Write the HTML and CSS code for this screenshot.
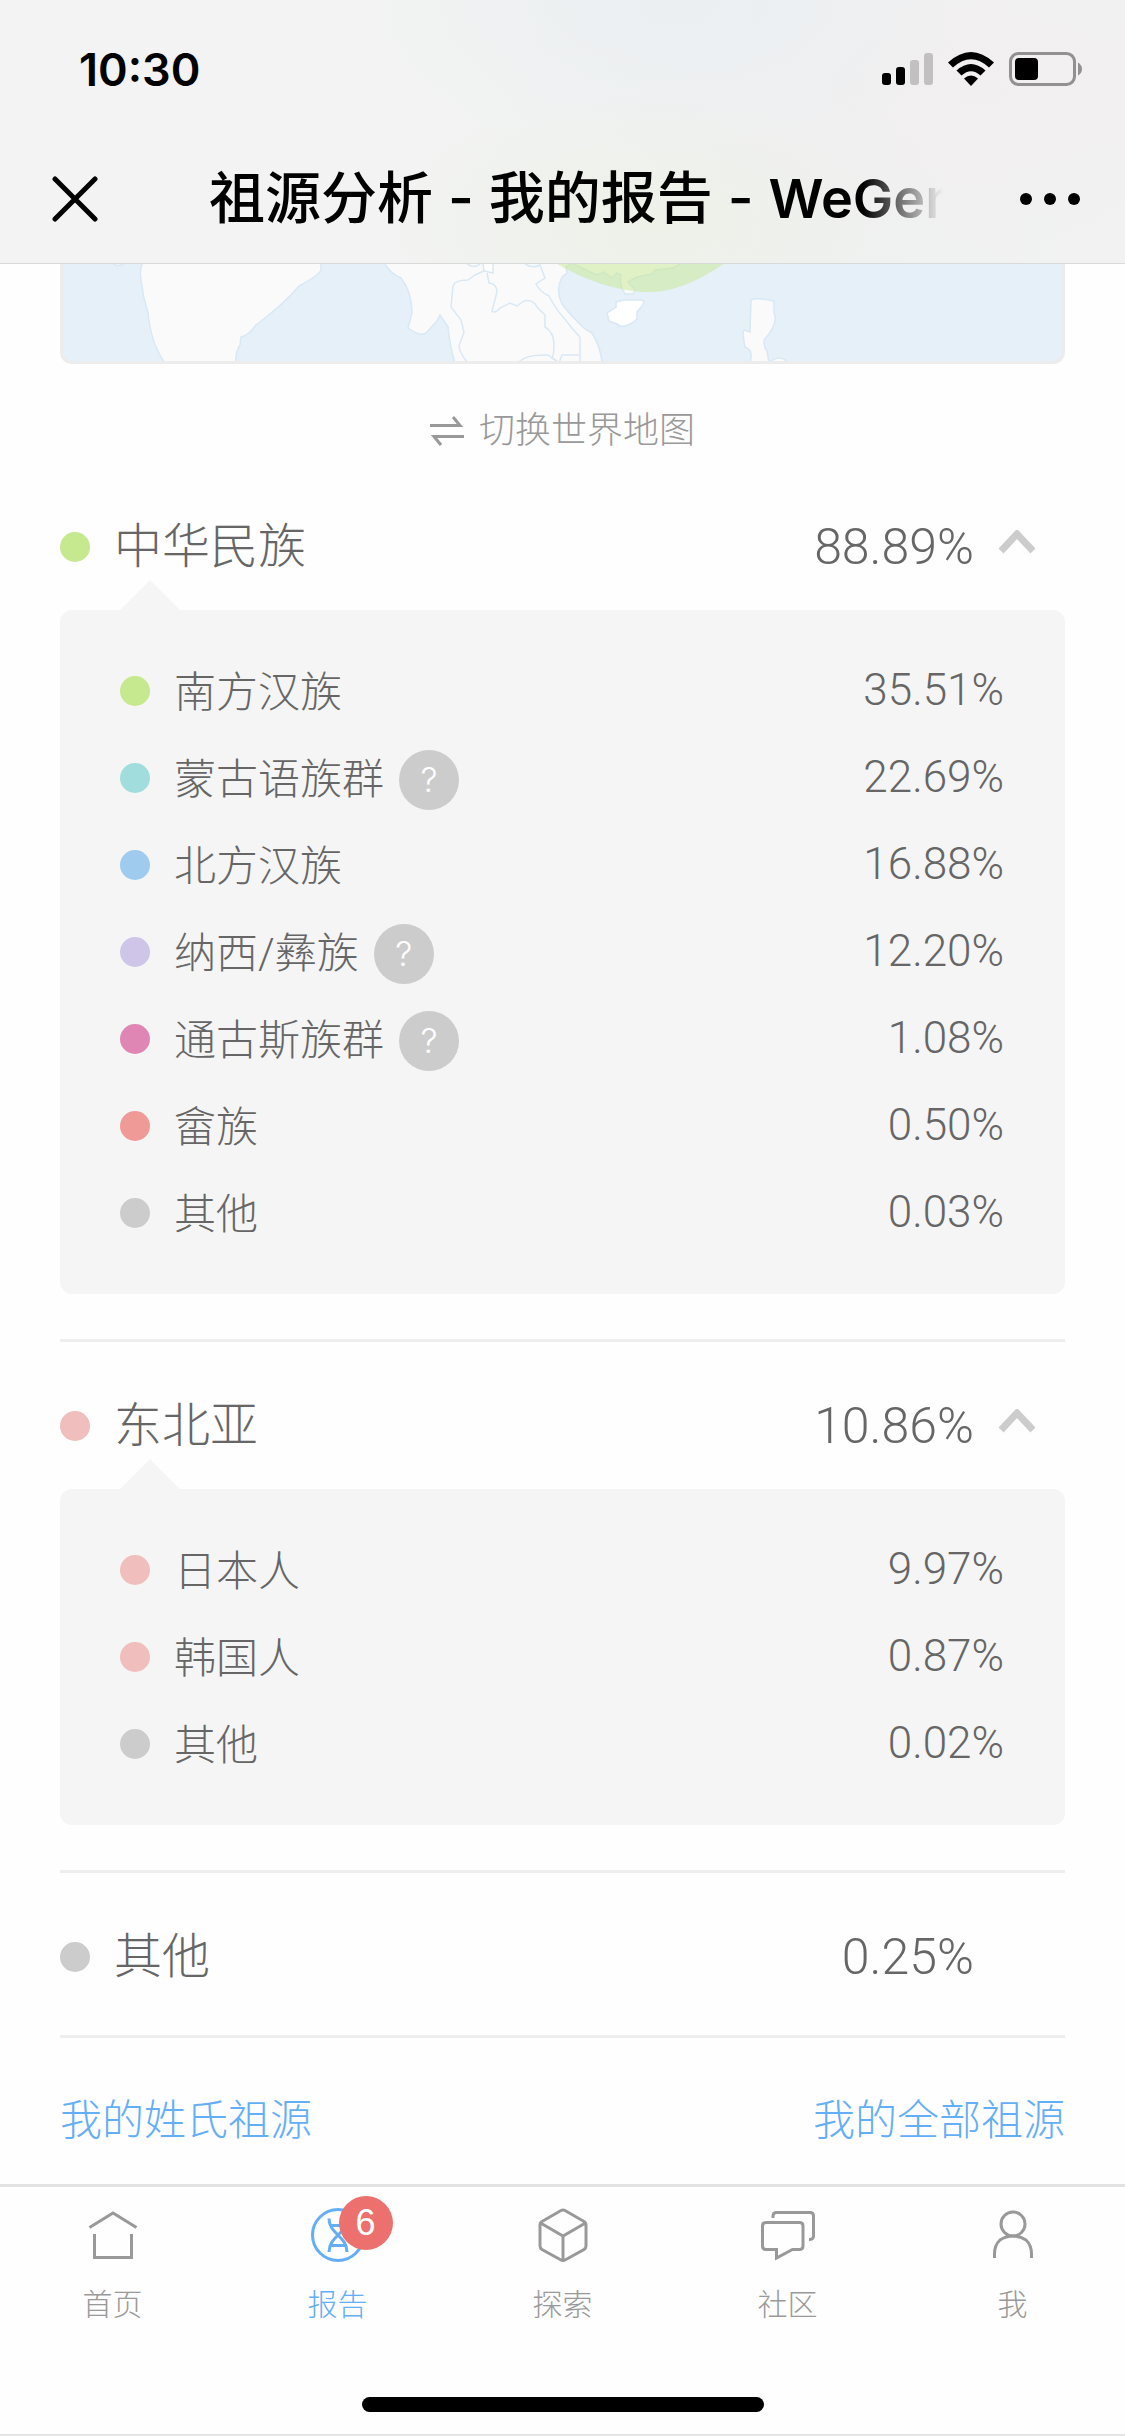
FILE: index.html
```html
<!DOCTYPE html>
<html lang="zh-CN">
<head>
    <meta charset="UTF-8">
    <meta name="viewport" content="width=device-width, initial-scale=1">
    <title>祖源分析 - 我的报告 - WeGene</title>
    <link rel="stylesheet" href="styles.css">
</head>
<body>
    <header class="header">
        <div class="status-bar">
            <span class="time">10:30</span>
            <div class="status-icons">
                <svg width="51" height="34" viewBox="0 0 51 34">
                    <rect x="0" y="21" width="9" height="12" rx="3"/>
                    <rect x="14" y="15" width="9" height="18" rx="3"/>
                    <rect x="28" y="8" width="9" height="25" rx="3" fill="#c2c0c1"/>
                    <rect x="42" y="1" width="9" height="32" rx="3" fill="#c2c0c1"/>
                </svg>
                <svg width="46" height="34" viewBox="0 0 46 34">
                    <path d="M0 10.500 Q23 -10.500 46 10.500 L41 15.500 Q23 -1 5 15.500Z"/>
                    <path d="M8.500 18.500 Q23 5.500 37.500 18.500 L32.500 23.500 Q23 15 13.500 23.500Z"/>
                    <path d="M16 26.500 Q23 20.500 30 26.500 L23 34Z"/>
                </svg>
                <svg width="74" height="34" viewBox="0 0 74 34">
                    <rect x="1.500" y="1.500" width="64" height="31" rx="8" fill="none" stroke="#929091" stroke-width="3"/>
                    <rect x="6" y="6" width="23" height="22" rx="4"/>
                    <path d="M69 10.500 Q73 13 73 17 Q73 21 69 23.500Z" fill="#929091"/>
                </svg>
            </div>
        </div>
        <div class="nav-bar">
            <button class="icon-btn" type="button" aria-label="关闭">
                <svg width="46" height="46" viewBox="0 0 46 46"><path d="M3 3 L43 43 M43 3 L3 43" fill="none" stroke="#000" stroke-width="5" stroke-linecap="round"/></svg>
            </button>
            <h1 class="title">祖源分析 - 我的报告 - <span class="brand">WeGene</span></h1>
            <button class="icon-btn" type="button" aria-label="更多">
                <svg width="60" height="12" viewBox="0 0 60 12"><circle cx="6" cy="6" r="6"/><circle cx="30" cy="6" r="6"/><circle cx="54" cy="6" r="6"/></svg>
            </button>
        </div>
    </header>

    <main class="content">
        <div class="map">
            <svg viewBox="63 264 999 97">
                <g fill="#fafafa" stroke="#d9e8f5" stroke-width="1.500">
                    <path d="M111 262 Q118 269 126 262"/>
                    <path d="M143 262 Q139 270 141 280 Q143 297 148 313 Q151 344 165 363 H236 Q235 353 240 345 L241 337 Q248 336 256 325 Q284 304 299 286 Q318 276 321 270 V262Z"/>
                    <path d="M384 262 Q389 273 401 278 Q412 292 412 313 L408 328 Q422 338 427 332 L437 321 L440 315 L448 327 Q450 347 455 363 H602 Q601 348 592 333 L585 329 Q570 315 562 304 Q555 290 562 277 L567 273 L566 267 L572 263 L590 272 L597 275 L604 272 L612 278 L617 273 L621 275 Q619 285 625 294 L633 294 L635 290 L628 282 L637 277 L652 274 L655 270 L673 268 L684 262Z"/>
                    <path d="M751 300 Q755 297 774 301 V313 Q779 323 764 340 Q764 349 767 351 L769 363 H750 Q754 350 745 347 Q742 332 744 330 L750 332Z"/>
                    <path d="M769 363 Q779 353 789 363"/>
                    <path fill="#fff" d="M607 313 L616 307 L616 302 L624 300 H641 L644 301 L643 305 L637 312 L637 319 L632 323 Q621 329 617 324 L609 321Z"/>
                    <path fill="#fff" d="M483 262 L484 271 L493 273 L493 262Z"/>
                </g>
                <g fill="none" stroke="#d9e8f5" stroke-width="1.500">
                    <path d="M467 264 Q474 269 480 264 M484 271 L475 275 L468 280 Q455 280 453 286 L451 307 L461 320 L464 332 L459 346 Q460 354 468 363"/>
                    <path d="M487 273 L489 283 Q497 284 497 292 L492 311 Q495 314 500 308 L510 303 L517 306 L524 301 Q533 299 537 307 L545 315 V327 Q554 332 554 345 Q554 354 552 358 L560 363"/>
                    <path d="M525 264 Q533 269 540 265 L545 278 L536 284 Q540 292 549 296 Q557 311 564 318 Q573 330 580 337 V363"/>
                    <path d="M518 363 Q525 354 548 355 L559 363 L562 355 L579 355"/>
                </g>
                <path fill="#c5e78f" opacity=".5" d="M554 262 C590 284 625 292 650 292 C675 292 702 279 726 262Z"/>
            </svg>
        </div>

        <button class="switch-map" type="button">
            <svg width="34" height="30" viewBox="0 0 34 30"><path d="M0 9.500 H30 L23 1 M34 20.500 H4 L11 29" fill="none" stroke="#999" stroke-width="3"/></svg>
            切换世界地图
        </button>

        <section class="group">
            <button class="group-head" type="button" aria-expanded="true">
                <i class="dot green"></i>
                <span class="name">中华民族</span>
                <span class="percent">88.89%</span>
                <svg class="arrow" viewBox="0 0 36 24"><path d="M2 21 L18 4 L34 21" fill="none" stroke="#ccc" stroke-width="7"/></svg>
            </button>
            <ul class="group-body">
                <li><i class="dot green"></i><span class="name">南方汉族</span><span class="percent">35.51%</span></li>
                <li><i class="dot teal"></i><span class="name">蒙古语族群 <button class="help" type="button">?</button></span><span class="percent">22.69%</span></li>
                <li><i class="dot blue"></i><span class="name">北方汉族</span><span class="percent">16.88%</span></li>
                <li><i class="dot purple"></i><span class="name">纳西/彝族 <button class="help" type="button">?</button></span><span class="percent">12.20%</span></li>
                <li><i class="dot magenta"></i><span class="name">通古斯族群 <button class="help" type="button">?</button></span><span class="percent">1.08%</span></li>
                <li><i class="dot red"></i><span class="name">畲族</span><span class="percent">0.50%</span></li>
                <li><i class="dot gray"></i><span class="name">其他</span><span class="percent">0.03%</span></li>
            </ul>
        </section>

        <section class="group">
            <button class="group-head" type="button" aria-expanded="true">
                <i class="dot pink"></i>
                <span class="name">东北亚</span>
                <span class="percent">10.86%</span>
                <svg class="arrow" viewBox="0 0 36 24"><path d="M2 21 L18 4 L34 21" fill="none" stroke="#ccc" stroke-width="7"/></svg>
            </button>
            <ul class="group-body">
                <li><i class="dot pink"></i><span class="name">日本人</span><span class="percent">9.97%</span></li>
                <li><i class="dot pink"></i><span class="name">韩国人</span><span class="percent">0.87%</span></li>
                <li><i class="dot gray"></i><span class="name">其他</span><span class="percent">0.02%</span></li>
            </ul>
        </section>

        <section class="group single">
            <div class="group-head">
                <i class="dot gray"></i>
                <span class="name">其他</span>
                <span class="percent">0.25%</span>
                <span class="arrow"></span>
            </div>
        </section>

        <div class="links">
            <a href="#">我的姓氏祖源</a>
            <a href="#">我的全部祖源</a>
        </div>
    </main>

    <nav class="tab-bar">
        <div class="tabs">
            <a class="tab" href="#">
                <svg viewBox="0 0 54 54"><path d="M3.500 19.500 L27 5 L50.500 19.500 M8.500 26 V49.500 H45.500 V26"/></svg>
                首页
            </a>
            <a class="tab active" href="#">
                <span class="icon-wrap">
                    <svg viewBox="0 0 54 54">
                        <circle cx="27" cy="27" r="25.500"/>
                        <path d="M18 10.500 C18 26 36 28 36 44 M36 10.500 C36 26 18 28 18 44 M20 17.500 H34 M20 37.500 H34"/>
                    </svg>
                    <span class="badge">6</span>
                </span>
                报告
            </a>
            <a class="tab" href="#">
                <svg viewBox="0 0 54 54"><path d="M25 2.500 Q27 1.500 29 2.500 L48 13.500 Q50 14.500 50 17 V38 Q50 40 48 41.500 L29 52 Q27 53 25 52 L6 41.500 Q4 40 4 38 V17 Q4 14.500 6 13.500Z M4.500 15 L27 28 L49.500 15 M27 28 V52"/></svg>
                探索
            </a>
            <a class="tab" href="#">
                <svg viewBox="0 0 54 54"><path d="M12 10 V8 Q12 4.500 15.500 4.500 H49 Q52.500 4.500 52.500 8 V28 Q52.500 31.500 48 31.500 M5 14.500 H38.500 Q42 14.500 42 18 V38 Q42 41.500 38.500 41.500 H31.500 L15.500 50 V41.500 H5 Q1.500 41.500 1.500 38 V18 Q1.500 14.500 5 14.500Z"/></svg>
                社区
            </a>
            <a class="tab" href="#">
                <svg viewBox="0 0 54 54"><circle cx="27" cy="16" r="12"/><path d="M8.500 50 V46 Q8.500 37 14 32 Q20 28 27 28 Q34 28 40 32 Q45.500 37 45.500 46 V50"/></svg>
                我
            </a>
        </div>
        <div class="home-indicator"></div>
    </nav>
</body>
</html>
```
FILE: styles.css
```css
* { box-sizing: border-box; }
body {
    margin: 0;
    min-height: 100vh;
    display: flex;
    flex-direction: column;
    font-family: 'Roboto', 'Noto Sans CJK SC', sans-serif;
    font-weight: 300;
    color: #666;
    background: #fefefe;
}
button {
    margin: 0;
    padding: 0;
    border: none;
    background: none;
    font: inherit;
    color: inherit;
    cursor: pointer;
}
a { text-decoration: none; }
svg { display: block; flex: none; }

/* status bar + title */
.header {
    border-bottom: 1px solid #d8dada;
    background:
        radial-gradient(ellipse 260px 130px at 58% 85%, #eef1e8, transparent),
        radial-gradient(ellipse 300px 160px at 60% 0%, #ebeff2, transparent),
        radial-gradient(ellipse 300px 160px at 88% 35%, #f2eff0, transparent),
        linear-gradient(90deg, #f3f3f3, #f2f3f2 40%, #eff0f1 70%, #f2f2f2);
    color: #000;
}
.status-bar {
    height: 132px;
    padding: 6px 42px 0 79px;
    display: flex;
    align-items: center;
    justify-content: space-between;
}
.time {
    font-family: 'Inter', sans-serif;
    font-size: 45px;
    font-weight: 600;
}
.status-icons { display: flex; gap: 15px; }
.nav-bar {
    height: 131px;
    padding: 2px 45px 0 52px;
    display: flex;
    align-items: center;
}
.title {
    flex: 1;
    margin: 0 77px 0 111px;
    overflow: hidden;
    white-space: nowrap;
    font-family: 'Inter', 'Noto Sans CJK SC', sans-serif;
    font-size: 56px;
    font-weight: 500;
    line-height: 84px;
    -webkit-mask-image: linear-gradient(90deg, #000 89%, transparent);
    mask-image: linear-gradient(90deg, #000 89%, transparent);
}
.brand {
    font-size: 54px;
    font-weight: 600;
}

.content { padding: 0 60px; }
.map {
    border: 3px solid #ececec;
    border-top: none;
    border-radius: 0 0 12px 12px;
    background: #e5f0f8;
    overflow: hidden;
}
.switch-map {
    width: 100%;
    padding: 40px 0 5px;
    display: flex;
    align-items: center;
    justify-content: center;
    gap: 15px;
    font-size: 36px;
    line-height: 54px;
    color: #999;
}

/* ancestry groups */
.group { border-bottom: 3px solid #eee; }
.group-head {
    width: 100%;
    height: 147px;
    padding: 21px 30px 0 0;
    display: flex;
    align-items: center;
    text-align: left;
    font-size: 48px;
    line-height: 72px;
}
.dot {
    width: 30px;
    height: 30px;
    margin-right: 24px;
    border-radius: 50%;
    flex: none;
}
.green { background: #c6e88e; }
.teal { background: #a1dddd; }
.blue { background: #9fcbee; }
.purple { background: #cfc5e8; }
.magenta { background: #df86b4; }
.red { background: #f09a97; }
.pink { background: #f0bebc; }
.gray { background: #ccc; }
.name {
    flex: 1;
    display: flex;
    align-items: center;
}
.percent { font-size: 50px; }
.arrow {
    width: 36px;
    height: 24px;
    margin: 0 0 10px 25px;
}
.group-body {
    position: relative;
    margin: 0 0 45px;
    padding: 37px 61px 38px 60px;
    border-radius: 12px;
    background: #f5f5f5;
    list-style: none;
    font-size: 42px;
    line-height: 63px;
}
.group-body::before {
    content: "";
    position: absolute;
    left: 60px;
    top: -30px;
    border: 30px solid transparent;
    border-top: none;
    border-bottom-color: #f5f5f5;
}
.group-body li {
    height: 87px;
    display: flex;
    align-items: center;
}
.group-body .name { padding-top: 4px; }
.group-body .percent { font-size: 44px; }
.help {
    width: 60px;
    height: 60px;
    margin-left: 15px;
    border-radius: 50%;
    background: #ccc;
    color: #fff;
    font-family: 'Inter', sans-serif;
    font-size: 34px;
    line-height: 60px;
}
.single { padding-bottom: 15px; }
.links {
    padding: 51px 0 32px;
    display: flex;
    justify-content: space-between;
    font-size: 42px;
    line-height: 63px;
}
.links a { color: #64aef5; }

/* bottom tabs */
.tab-bar {
    margin-top: auto;
    border-top: 3px solid #e2e2e3;
    border-bottom: 2px solid #e4e4e4;
}
.tabs { display: flex; }
.tab {
    flex: 1;
    padding-top: 21px;
    display: flex;
    flex-direction: column;
    align-items: center;
    gap: 20px;
    font-size: 30px;
    line-height: 45px;
    color: #999;
}
.tab svg {
    width: 54px;
    height: 54px;
    fill: none;
    stroke: currentColor;
    stroke-width: 3;
}
.active { color: #64aef5; }
.icon-wrap { position: relative; }
.badge {
    position: absolute;
    left: 28px;
    top: -12px;
    width: 54px;
    height: 54px;
    border-radius: 50%;
    background: #ec716e;
    color: #fff;
    font-family: 'Liberation Sans', sans-serif;
    font-size: 36px;
    font-weight: 400;
    line-height: 54px;
    text-align: center;
}
.home-indicator {
    width: 402px;
    height: 15px;
    margin: 70px auto 22px;
    border-radius: 8px;
    background: #000;
}
```
